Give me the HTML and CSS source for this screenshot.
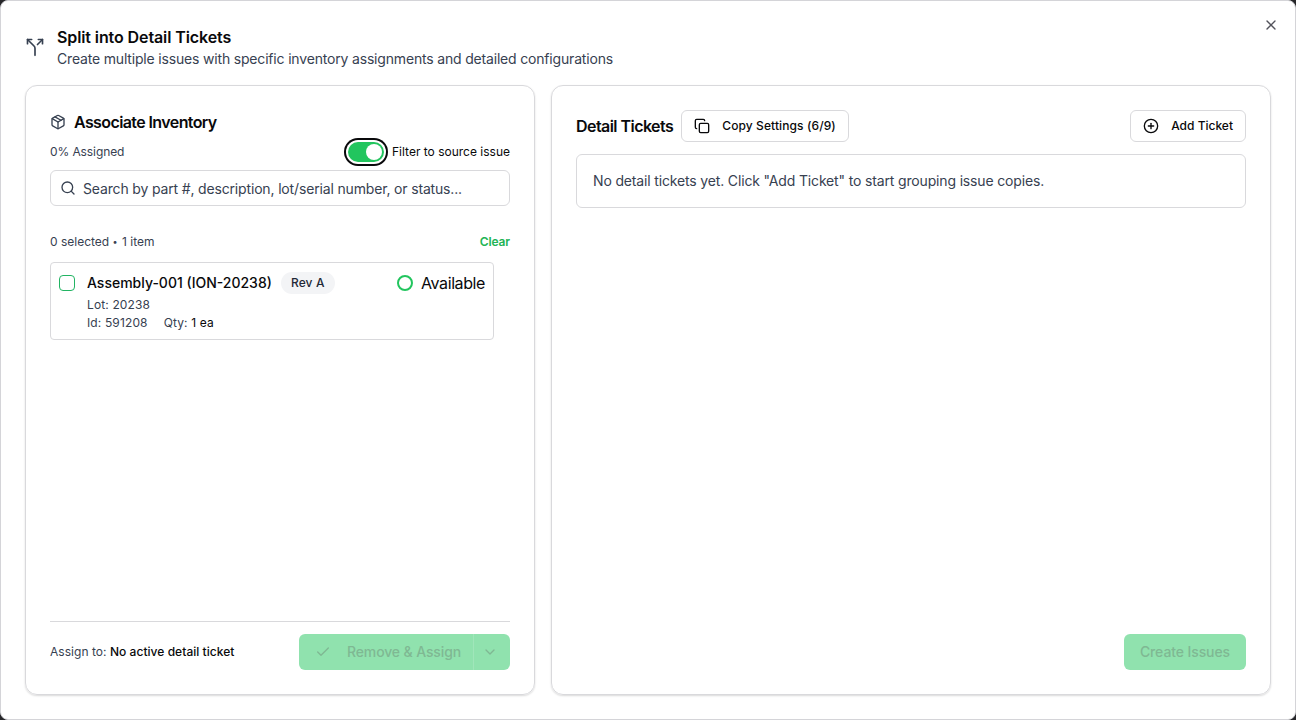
FILE: index.html
```html
<!DOCTYPE html>
<html lang="en">
<head>
	<meta charset="UTF-8">
	<title>Split into Detail Tickets</title>
	<link rel="stylesheet" href="styles.css">
</head>
<body>
	<div class="dialog">
		<div class="header">
			<svg class="icon header-icon" viewBox="0 0 24 24"><path d="M16 3h5v5"/><path d="M8 3H3v5"/><path d="M12 22v-8.3a4 4 0 0 0-1.172-2.872L3 3"/><path d="m15 9 6-6"/></svg>
			<div>
				<div class="title">Split into Detail Tickets</div>
				<div class="subtitle">Create multiple issues with specific inventory assignments and detailed configurations</div>
			</div>
			<div class="close">
				<svg class="icon" viewBox="0 0 24 24"><path d="M18 6 6 18"/><path d="m6 6 12 12"/></svg>
			</div>
		</div>
		<div class="panels">
			<!-- inventory -->
			<div class="panel inventory">
				<div class="panel-title">
					<svg class="icon" viewBox="0 0 24 24"><path d="M11 21.73a2 2 0 0 0 2 0l7-4A2 2 0 0 0 21 16V8a2 2 0 0 0-1-1.73l-7-4a2 2 0 0 0-2 0l-7 4A2 2 0 0 0 3 8v8a2 2 0 0 0 1 1.73z"/><path d="M12 22V12"/><path d="m3.3 7 8.7 5 8.7-5"/><path d="m7.5 4.27 9 5.15"/></svg>
					<span>Associate Inventory</span>
				</div>
				<div class="filter">
					<span class="muted assigned">0% Assigned</span>
					<div class="filter-right">
						<div class="switch"><div class="thumb"></div></div>
						<span>Filter to source issue</span>
					</div>
				</div>
				<div class="search">
					<svg class="icon" viewBox="0 0 24 24"><circle cx="11" cy="11" r="8"/><path d="m21 21-4.3-4.3"/></svg>
					<span>Search by part #, description, lot/serial number, or status...</span>
				</div>
				<div class="count">
					<span class="muted">0 selected <span class="dot">•</span> 1 item</span>
					<span class="clear">Clear</span>
				</div>
				<div class="item">
					<div class="checkbox"></div>
					<div class="item-info">
						<div class="item-top">
							<span class="item-name">Assembly-001 (ION-20238)</span>
							<span class="badge">Rev A</span>
						</div>
						<div class="item-line">Lot: 20238</div>
						<div class="item-line"><span>Id: 591208</span><span>Qty: <b>1 ea</b></span></div>
					</div>
					<div class="status"><div class="ring"></div><span>Available</span></div>
				</div>
				<div class="footer line">
					<div class="assign">Assign to: <b>No active detail ticket</b></div>
					<div class="split">
						<div class="btn-main">
							<svg class="icon" viewBox="0 0 24 24"><path d="M20 6 9 17l-5-5"/></svg>
							<span>Remove &amp; Assign</span>
						</div>
						<div class="btn-more">
							<svg class="icon" viewBox="0 0 24 24"><path d="m6 9 6 6 6-6"/></svg>
						</div>
					</div>
				</div>
			</div>
			<!-- tickets -->
			<div class="panel tickets">
				<div class="toolbar">
					<span class="toolbar-title">Detail Tickets</span>
					<div class="btn copy">
						<svg class="icon" viewBox="0 0 24 24"><rect width="14" height="14" x="8" y="8" rx="2"/><path d="M4 16c-1.1 0-2-.9-2-2V4c0-1.1.9-2 2-2h10c1.1 0 2 .9 2 2"/></svg>
						<span>Copy Settings (6/9)</span>
					</div>
					<div class="btn add">
						<svg class="icon" viewBox="0 0 24 24"><circle cx="12" cy="12" r="10"/><path d="M8 12h8"/><path d="M12 8v8"/></svg>
						<span>Add Ticket</span>
					</div>
				</div>
				<div class="empty">No detail tickets yet. Click "Add Ticket" to start grouping issue copies.</div>
				<div class="footer">
					<div class="create">Create Issues</div>
				</div>
			</div>
		</div>
	</div>
</body>
</html>
```
FILE: styles.css
```css
*{
	margin: 0;
	padding: 0;
	box-sizing: border-box;
}
body{
	background: #27272a;
	font-family: Inter, "Liberation Sans", sans-serif;
	font-size: 12px;
	line-height: 16px;
	color: #09090b;
	white-space: nowrap;
}
b{
	font-weight: 500;
	color: #09090b;
}
.icon{
	width: 16px;
	height: 16px;
	flex: none;
	display: block;
	fill: none;
	stroke: currentColor;
	stroke-width: 2;
	stroke-linecap: round;
	stroke-linejoin: round;
}
.muted{
	color: #374151;
}
.dialog{
	width: 100%;
	height: 720px;
	padding: 24px;
	background: #fff;
	border: 1px solid #d4d4d8;
	border-radius: 8px;
	display: flex;
	flex-direction: column;
	gap: 16px;
}
.header{
	display: flex;
	align-items: center;
	gap: 12px;
	height: 44px;
}
.header-icon{
	width: 20px;
	height: 20px;
	color: #374151;
}
.title{
	font-size: 16px;
	line-height: 24px;
	font-weight: 600;
	letter-spacing: -0.1px;
}
.subtitle{
	font-size: 14px;
	line-height: 20px;
	color: #374151;
	letter-spacing: -0.178px;
}
.close{
	margin-left: auto;
	margin-right: -8px;
	align-self: flex-start;
	margin-top: -8px;
	color: #52525b;
}
.panels{
	flex: 1;
	display: grid;
	grid-template-columns: 510px 1fr;
	gap: 16px;
}
.panel{
	display: flex;
	flex-direction: column;
	padding: 24px;
	border: 1px solid #d9d9dc;
	border-radius: 12px;
	box-shadow: 0 1px 2px rgba(0,0,0,0.15);
}
.panel-title{
	display: flex;
	align-items: center;
	gap: 8px;
	font-size: 16px;
	line-height: 24px;
	font-weight: 600;
	letter-spacing: -0.6px;
}
.panel-title .icon{
	color: #374151;
}
.filter{
	display: flex;
	justify-content: space-between;
	align-items: center;
	margin-top: 8px;
	height: 20px;
}
.assigned{
	letter-spacing: -0.1px;
}
.filter-right{
	display: flex;
	align-items: center;
	gap: 8px;
}
.switch{
	width: 36px;
	height: 20px;
	padding: 2px;
	border-radius: 10px;
	background: #22c55e;
	box-shadow: 0 0 0 2px #fff, 0 0 0 4px #09090b;
	display: flex;
	justify-content: flex-end;
}
.thumb{
	width: 16px;
	height: 16px;
	border-radius: 50%;
	background: #fff;
}
.search{
	display: flex;
	align-items: center;
	gap: 7px;
	margin-top: 8px;
	height: 36px;
	padding: 0 9px;
	border: 1px solid #d9d9dc;
	border-radius: 6px;
	font-size: 14px;
	color: #374151;
	letter-spacing: -0.16px;
}
.search span{
	padding-top: 2px;
}
.count{
	display: flex;
	justify-content: space-between;
	margin-top: 28px;
	height: 16px;
}
.dot{
	font-size: 9px;
	line-height: 1;
	letter-spacing: 1px;
	vertical-align: 1px;
}
.clear{
	color: #22b455;
	font-weight: 600;
	letter-spacing: -0.1px;
}
.item{
	display: flex;
	gap: 12px;
	width: 444px;
	height: 78px;
	margin-top: 12px;
	padding: 8px;
	border: 1px solid #d9d9dc;
	border-radius: 4px;
}
.checkbox{
	width: 16px;
	height: 16px;
	margin-top: 4px;
	border: 1px solid #22b463;
	border-radius: 4px;
}
.item-top{
	display: flex;
	align-items: center;
	gap: 9px;
	height: 24px;
	margin-bottom: 1px;
}
.item-name{
	font-size: 14px;
	font-weight: 500;
}
.badge{
	padding: 3px 10px;
	border-radius: 11px;
	background: #f3f4f6;
	color: #1f2937;
	font-weight: 500;
	letter-spacing: 0.15px;
}
.item-line{
	display: flex;
	gap: 16px;
	line-height: 18px;
	color: #374151;
	letter-spacing: 0.13px;
}
.item-line b{
	font-weight: 400;
}
.status{
	margin-left: auto;
	display: flex;
	align-items: center;
	gap: 8px;
	height: 24px;
	font-size: 16px;
	letter-spacing: -0.4px;
}
.ring{
	width: 16px;
	height: 16px;
	border: 2px solid #22c55e;
	border-radius: 50%;
}
.footer{
	display: flex;
	align-items: center;
	justify-content: space-between;
	margin-top: auto;
}
.line{
	padding-top: 12px;
	border-top: 1px solid #d9d9dc;
}
.assign{
	color: #374151;
	letter-spacing: 0.04px;
}
.split{
	display: flex;
	height: 36px;
	border-radius: 6px;
	background: #90e2ae;
	color: #7fb893;
	font-size: 14px;
	font-weight: 500;
	letter-spacing: -0.13px;
}
.btn-main{
	display: flex;
	align-items: center;
	gap: 16px;
	width: 175px;
	padding-left: 16px;
	border-right: 1px solid #a0e6ba;
}
.btn-more{
	display: flex;
	align-items: center;
	justify-content: center;
	width: 36px;
}
.btn-more .icon{
	margin-right: 4px;
}
.toolbar{
	display: flex;
	align-items: center;
	gap: 8px;
	height: 32px;
}
.toolbar-title{
	font-size: 16px;
	font-weight: 600;
	letter-spacing: -0.55px;
}
.btn{
	display: flex;
	align-items: center;
	gap: 12px;
	height: 32px;
	padding: 0 12px;
	border: 1px solid #d9d9dc;
	border-radius: 6px;
	font-weight: 500;
}
.copy{
	letter-spacing: 0.1px;
}
.add{
	margin-left: auto;
}
.empty{
	margin-top: 12px;
	height: 54px;
	padding: 16px;
	border: 1px solid #d9d9dc;
	border-radius: 6px;
	font-size: 14px;
	line-height: 20px;
	color: #374151;
	letter-spacing: -0.155px;
}
.tickets .footer{
	justify-content: flex-end;
}
.create{
	height: 36px;
	padding: 0 16px;
	border-radius: 6px;
	background: #90e2ae;
	color: #7fb893;
	font-size: 14px;
	line-height: 36px;
	font-weight: 500;
	letter-spacing: -0.1px;
}
```
